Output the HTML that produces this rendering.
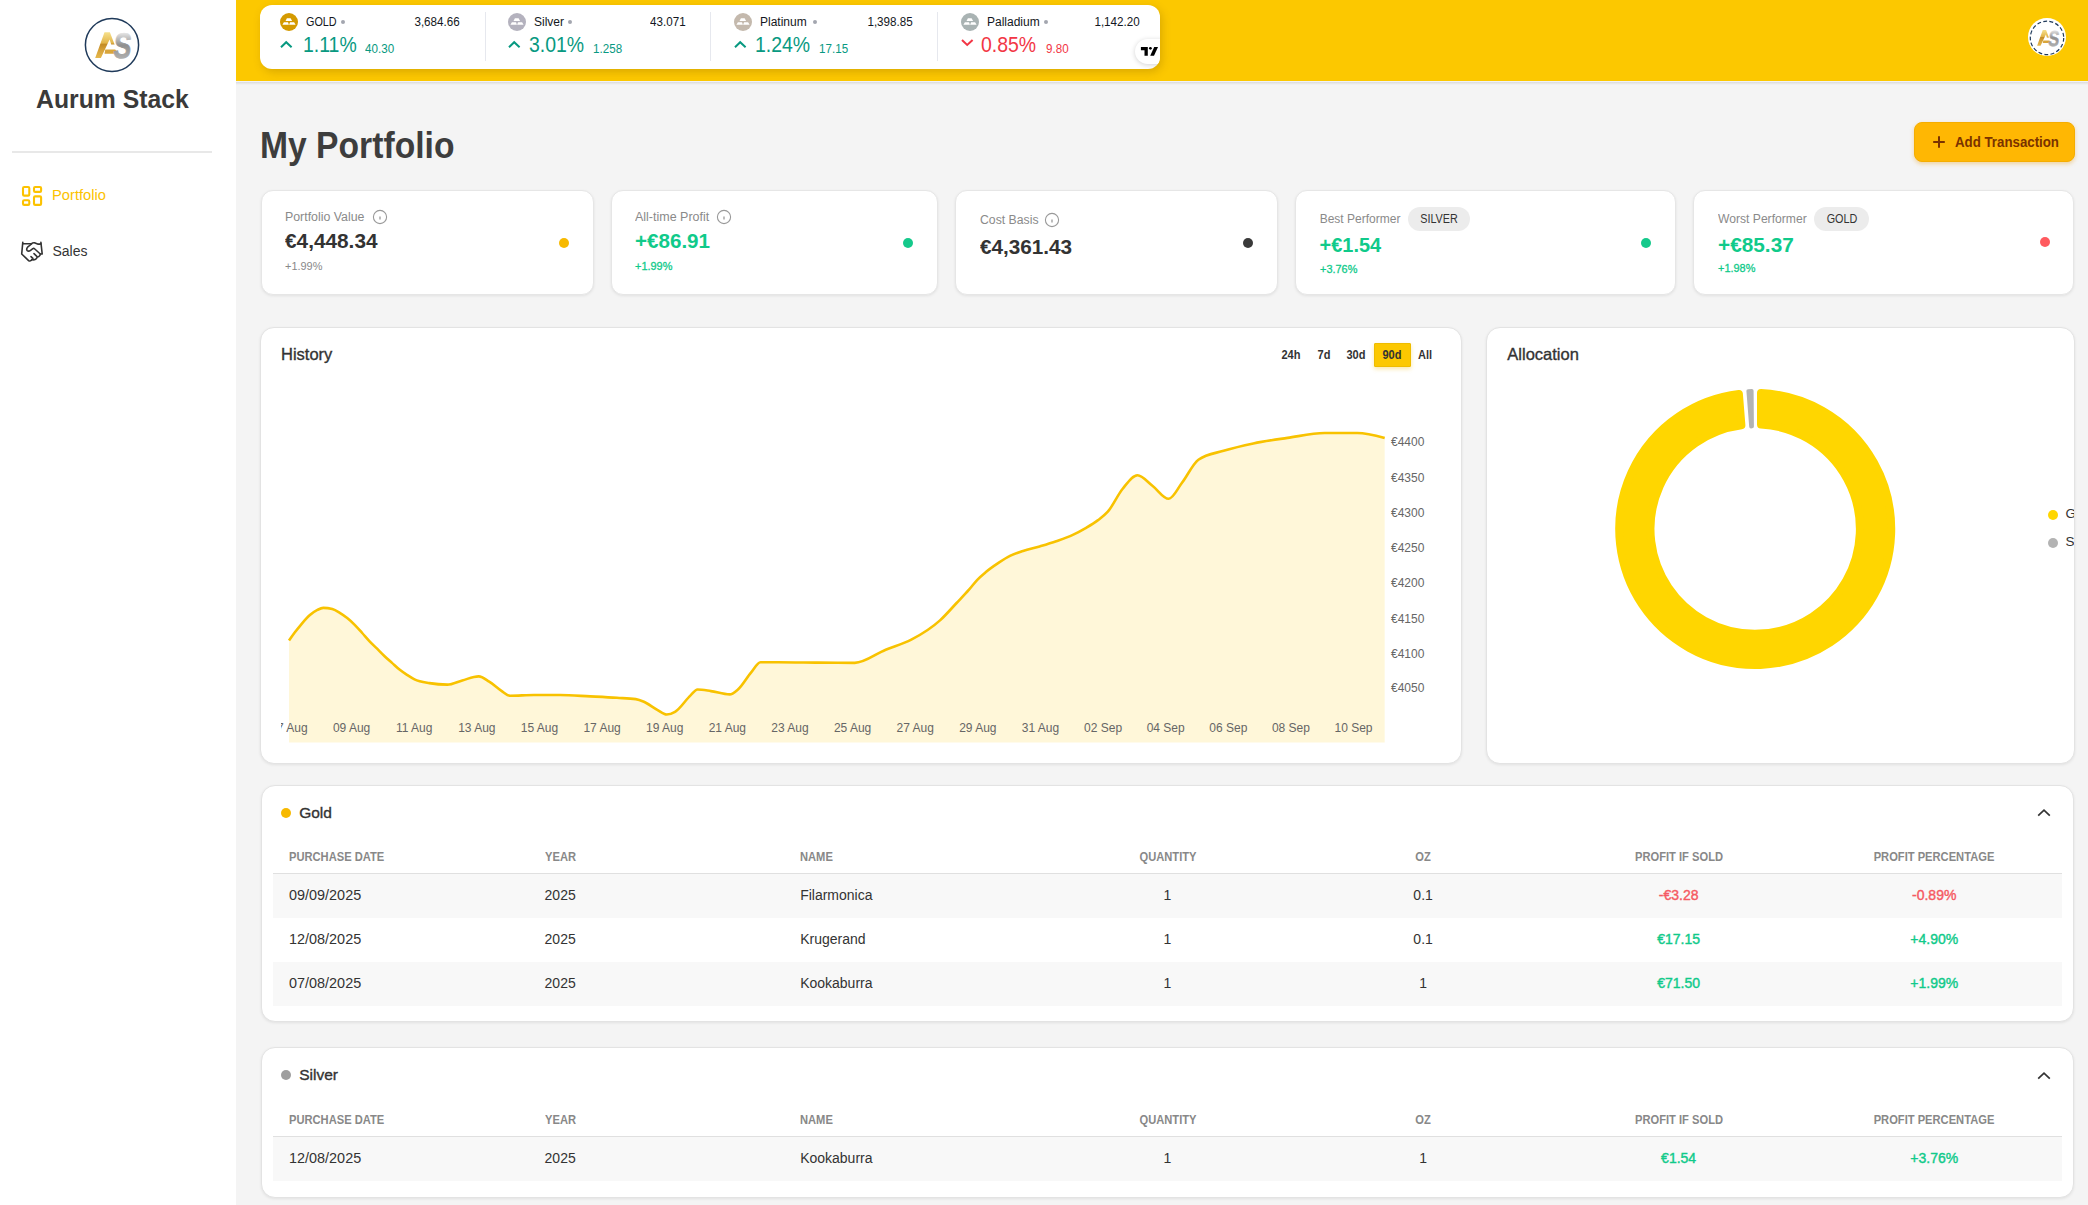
<!DOCTYPE html><html><head><meta charset="utf-8"><style>
html,body{margin:0;padding:0;}
body{width:2088px;height:1205px;position:relative;overflow:hidden;background:#f4f4f4;font-family:"Liberation Sans",sans-serif;}
.t{position:absolute;white-space:nowrap;}
.card{position:absolute;background:#fff;border:1px solid #e3e3e3;box-shadow:0 1px 3px rgba(0,0,0,0.08);box-sizing:border-box;}
</style></head><body>
<div style="position:absolute;left:0px;top:0px;width:236px;height:1205px;background:#fff;"></div>
<svg style="position:absolute;left:84px;top:17px" width="56" height="56" viewBox="0 0 56 56">
<defs>
<linearGradient id="ga" x1="0" y1="0" x2="0" y2="1"><stop offset="0" stop-color="#f6e08c"/><stop offset="0.42" stop-color="#e2b54a"/><stop offset="0.46" stop-color="#c38b26"/><stop offset="0.7" stop-color="#d6a23a"/><stop offset="1" stop-color="#e6b84c"/></linearGradient>
<linearGradient id="gs" x1="0" y1="0" x2="0" y2="1"><stop offset="0" stop-color="#eeeeee"/><stop offset="0.5" stop-color="#9a9a9a"/><stop offset="1" stop-color="#b8b8b8"/></linearGradient>
<linearGradient id="gs2" gradientUnits="userSpaceOnUse" x1="0" y1="-26" x2="0" y2="1"><stop offset="0" stop-color="#f0f0f0"/><stop offset="0.5" stop-color="#8f8f8f"/><stop offset="1" stop-color="#b0b0b0"/></linearGradient>
</defs>
<circle cx="28" cy="28" r="26.6" fill="#fff" stroke="#1f3a5a" stroke-width="1.5"/>
<path d="M20.5,15.3 L25.9,15.3 L30.6,27.5 L27.2,27.5 L25.6,22.6 L16.9,41 L11.2,41 Z" fill="url(#ga)"/>
<path d="M21.3,32.4 L31.2,32.4 L32.8,34.3 L30.8,36.7 L20.5,36.7 Z" fill="#d9a53a"/>
<text x="0" y="0" font-family="Liberation Sans" font-weight="700" font-size="35" fill="url(#gs2)" text-anchor="middle" stroke="url(#gs2)" stroke-width="0.8" transform="translate(37.4,40.9) scale(0.76,1.02) skewX(-8)">S</text>
</svg>
<div class="t" style="left:36.10px;top:85.84px;font-size:26px;line-height:26px;color:#3a3a3a;font-weight:700;transform:scaleX(0.952);transform-origin:left center;">Aurum Stack</div>
<div style="position:absolute;left:12px;top:151px;width:200px;height:2px;background:#e8e8e8;"></div>
<svg style="position:absolute;left:20px;top:184px" width="24" height="24" viewBox="0 0 24 24" fill="none" stroke="#fcc200" stroke-width="2.1">
<rect x="3" y="3" width="6.3" height="8.6" rx="1.2"/><rect x="14" y="3" width="7.1" height="4.9" rx="1.2"/>
<rect x="3" y="16.2" width="6.3" height="4.7" rx="1.2"/><rect x="14" y="12.4" width="7.1" height="8.5" rx="1.2"/>
</svg>
<div class="t" style="left:52.30px;top:187.95px;font-size:14px;line-height:14px;color:#fcc200;font-weight:400;transform:scaleX(1.05);transform-origin:left center;">Portfolio</div>
<svg style="position:absolute;left:20px;top:240px" width="24" height="24" viewBox="0 0 24 24" fill="none" stroke="#333" stroke-width="1.6" stroke-linejoin="round" stroke-linecap="round">
<path d="M2.8,2.3 L1.7,14 L8.6,20.6 Q9.8,21.5 11.2,20.4 L11.9,19.6"/>
<path d="M2.9,3.8 L11.2,3.8 Q13,2.4 15,2.9 L17.6,4 Q18.4,4.3 20.9,3.9"/>
<path d="M20.9,2.4 L22.2,14 L20.3,14"/>
<path d="M11.5,4 L7.6,7.2 Q6,9 7.2,10.6 Q8.6,11.8 10.6,10.3 L12.8,8.6 Q13.8,8.1 14.8,9 L20.3,14 Q20.3,15.5 18.9,16.4 L17.3,17.1 Q16.8,18.5 15.6,19.2 L14.3,19.8 Q13,20.1 11.9,19.6"/>
<path d="M14,13.6 L16.6,16.1 M11,16.6 L12.9,18.4"/>
</svg>
<div class="t" style="left:52.50px;top:244.05px;font-size:14px;line-height:14px;color:#333;font-weight:400;">Sales</div>
<div style="position:absolute;left:236px;top:0px;width:1852px;height:81px;background:#fcc800;"></div>
<div style="position:absolute;left:236px;top:81px;width:1852px;height:1px;background:#f0f2f9;"></div>
<div style="position:absolute;left:236px;top:82px;width:1852px;height:3px;background:linear-gradient(rgba(0,0,0,0.1),rgba(0,0,0,0));"></div>
<div style="position:absolute;left:260px;top:5px;width:900px;height:64px;border-radius:12px;background:#fff;box-shadow:2px 3px 8px rgba(120,80,0,0.25);overflow:hidden"><div style="position:absolute;left:874.5px;top:33.8px;width:60px;height:25px;border-radius:13px;background:#fff;box-shadow:0 1px 5px rgba(0,0,0,0.18)"></div><svg style="position:absolute;left:880px;top:41px" width="20" height="11" viewBox="0 0 20 11"><path d="M0.9,1 L7.8,1 L7.8,9.8 L4.5,9.8 L4.5,4.2 L0.9,4.2 Z" fill="#000"/><circle cx="10.4" cy="2.3" r="1.4" fill="#000"/><path d="M14.2,1 L18,1 L14,9.8 L10.2,9.8 Z" fill="#000"/></svg></div><div style="position:absolute;left:484.5px;top:12px;width:1px;height:49px;background:#e6e8ee;"></div>
<div style="position:absolute;left:710.3px;top:12px;width:1px;height:49px;background:#e6e8ee;"></div>
<div style="position:absolute;left:937.2px;top:12px;width:1px;height:49px;background:#e6e8ee;"></div>
<svg style="position:absolute;left:280px;top:13px" width="18" height="18" viewBox="0 0 18 18"><circle cx="9" cy="9" r="9" fill="#d49a00"/>
<path d="M6.9,5.2 L10.6,5.2 L12.1,7.9 L5.5,7.9 Z M3.9,9.2 L8.0,9.2 L8.9,11.8 L2.4,11.8 Z M10.1,9.2 L14.1,9.2 L15.6,11.8 L9.1,11.8 Z" fill="#fff"/></svg>
<div class="t" style="left:306.00px;top:16.44px;font-size:12px;line-height:12px;color:#131722;font-weight:400;transform:scaleX(0.9);transform-origin:left center;">GOLD</div>
<div style="position:absolute;left:340.80px;top:20.00px;width:4px;height:4px;border-radius:50%;background:#a3a6af"></div>
<div class="t" style="right:1628.50px;text-align:right;top:16.24px;font-size:12px;line-height:12px;color:#131722;font-weight:400;transform:scaleX(0.97);transform-origin:right center;">3,684.66</div>
<svg style="position:absolute;left:280px;top:40px" width="13" height="9" viewBox="0 0 13 9"><path d="M1,7.2 L6.2,2.2 L11.6,7.2" fill="none" stroke="#089981" stroke-width="2"/></svg>
<div class="t" style="left:302.50px;top:35.40px;font-size:21.5px;line-height:21.5px;color:#089981;font-weight:400;transform:scaleX(0.905);transform-origin:left center;">1.11%</div>
<div class="t" style="left:365.00px;top:43.12px;font-size:12.5px;line-height:12.5px;color:#089981;font-weight:400;transform:scaleX(0.93);transform-origin:left center;">40.30</div>
<svg style="position:absolute;left:508px;top:13px" width="18" height="18" viewBox="0 0 18 18"><circle cx="9" cy="9" r="9" fill="#b4b2be"/>
<path d="M6.9,5.2 L10.6,5.2 L12.1,7.9 L5.5,7.9 Z M3.9,9.2 L8.0,9.2 L8.9,11.8 L2.4,11.8 Z M10.1,9.2 L14.1,9.2 L15.6,11.8 L9.1,11.8 Z" fill="#fff"/></svg>
<div class="t" style="left:534.00px;top:16.44px;font-size:12px;line-height:12px;color:#131722;font-weight:400;transform:scaleX(1.0);transform-origin:left center;">Silver</div>
<div style="position:absolute;left:567.80px;top:20.00px;width:4px;height:4px;border-radius:50%;background:#a3a6af"></div>
<div class="t" style="right:1402.50px;text-align:right;top:16.24px;font-size:12px;line-height:12px;color:#131722;font-weight:400;transform:scaleX(0.97);transform-origin:right center;">43.071</div>
<svg style="position:absolute;left:508px;top:40px" width="13" height="9" viewBox="0 0 13 9"><path d="M1,7.2 L6.2,2.2 L11.6,7.2" fill="none" stroke="#089981" stroke-width="2"/></svg>
<div class="t" style="left:528.80px;top:35.40px;font-size:21.5px;line-height:21.5px;color:#089981;font-weight:400;transform:scaleX(0.905);transform-origin:left center;">3.01%</div>
<div class="t" style="left:593.00px;top:43.12px;font-size:12.5px;line-height:12.5px;color:#089981;font-weight:400;transform:scaleX(0.93);transform-origin:left center;">1.258</div>
<svg style="position:absolute;left:734px;top:13px" width="18" height="18" viewBox="0 0 18 18"><circle cx="9" cy="9" r="9" fill="#c4b9ad"/>
<path d="M6.9,5.2 L10.6,5.2 L12.1,7.9 L5.5,7.9 Z M3.9,9.2 L8.0,9.2 L8.9,11.8 L2.4,11.8 Z M10.1,9.2 L14.1,9.2 L15.6,11.8 L9.1,11.8 Z" fill="#fff"/></svg>
<div class="t" style="left:760.00px;top:16.44px;font-size:12px;line-height:12px;color:#131722;font-weight:400;transform:scaleX(1.0);transform-origin:left center;">Platinum</div>
<div style="position:absolute;left:813.00px;top:20.00px;width:4px;height:4px;border-radius:50%;background:#a3a6af"></div>
<div class="t" style="right:1175.50px;text-align:right;top:16.24px;font-size:12px;line-height:12px;color:#131722;font-weight:400;transform:scaleX(0.97);transform-origin:right center;">1,398.85</div>
<svg style="position:absolute;left:734px;top:40px" width="13" height="9" viewBox="0 0 13 9"><path d="M1,7.2 L6.2,2.2 L11.6,7.2" fill="none" stroke="#089981" stroke-width="2"/></svg>
<div class="t" style="left:755.20px;top:35.40px;font-size:21.5px;line-height:21.5px;color:#089981;font-weight:400;transform:scaleX(0.905);transform-origin:left center;">1.24%</div>
<div class="t" style="left:819.00px;top:43.12px;font-size:12.5px;line-height:12.5px;color:#089981;font-weight:400;transform:scaleX(0.93);transform-origin:left center;">17.15</div>
<svg style="position:absolute;left:961px;top:13px" width="18" height="18" viewBox="0 0 18 18"><circle cx="9" cy="9" r="9" fill="#a9b3b3"/>
<path d="M6.9,5.2 L10.6,5.2 L12.1,7.9 L5.5,7.9 Z M3.9,9.2 L8.0,9.2 L8.9,11.8 L2.4,11.8 Z M10.1,9.2 L14.1,9.2 L15.6,11.8 L9.1,11.8 Z" fill="#fff"/></svg>
<div class="t" style="left:987.00px;top:16.44px;font-size:12px;line-height:12px;color:#131722;font-weight:400;transform:scaleX(1.0);transform-origin:left center;">Palladium</div>
<div style="position:absolute;left:1044.00px;top:20.00px;width:4px;height:4px;border-radius:50%;background:#a3a6af"></div>
<div class="t" style="right:948.50px;text-align:right;top:16.24px;font-size:12px;line-height:12px;color:#131722;font-weight:400;transform:scaleX(0.97);transform-origin:right center;">1,142.20</div>
<svg style="position:absolute;left:961px;top:38px" width="13" height="9" viewBox="0 0 13 9"><path d="M1,2 L6.2,7 L11.6,2" fill="none" stroke="#f23645" stroke-width="2"/></svg>
<div class="t" style="left:981.20px;top:35.40px;font-size:21.5px;line-height:21.5px;color:#f23645;font-weight:400;transform:scaleX(0.905);transform-origin:left center;">0.85%</div>
<div class="t" style="left:1046.00px;top:43.12px;font-size:12.5px;line-height:12.5px;color:#f23645;font-weight:400;transform:scaleX(0.93);transform-origin:left center;">9.80</div>
<svg style="position:absolute;left:2028px;top:18px" width="38" height="39" viewBox="0 0 38 39">
<circle cx="19" cy="19" r="19" fill="#fff"/>
<circle cx="19" cy="19.9" r="16.7" fill="none" stroke="#1f3a5a" stroke-width="1.2" stroke-dasharray="3.9 2.3"/>
<g transform="translate(2.27,2.7) scale(0.61)">
<path d="M20.5,15.3 L25.9,15.3 L30.6,27.5 L27.2,27.5 L25.6,22.6 L16.9,41 L11.2,41 Z" fill="url(#ga)"/>
<path d="M21.3,32.4 L31.2,32.4 L32.8,34.3 L30.8,36.7 L20.5,36.7 Z" fill="#d9a53a"/>
<text x="0" y="0" font-family="Liberation Sans" font-weight="700" font-size="35" fill="url(#gs2)" stroke="url(#gs2)" stroke-width="0.8" transform="translate(37.4,40.9) scale(0.76,1.02) skewX(-8)" text-anchor="middle">S</text>
</g>
</svg>
<div class="t" style="left:259.80px;top:127.52px;font-size:36px;line-height:36px;color:#3d3d3d;font-weight:700;transform:scaleX(0.935);transform-origin:left center;">My Portfolio</div>
<div style="position:absolute;left:1914px;top:122px;width:161px;height:40px;border-radius:8px;background:#ffb703;box-shadow:0 2px 4px rgba(230,150,0,0.35);box-sizing:border-box;border:1px solid #f5ad00"></div>
<svg style="position:absolute;left:1932px;top:135px" width="14" height="14" viewBox="0 0 14 14"><path d="M7,1.2 V12.8 M1.2,7 H12.8" stroke="#7a3200" stroke-width="2"/></svg>
<div class="t" style="left:1955.20px;top:135.35px;font-size:14px;line-height:14px;color:#7a3200;font-weight:700;transform:scaleX(0.948);transform-origin:left center;">Add Transaction</div>
<div class="card" style="left:261px;top:190px;width:333px;height:105px;border-radius:12px;border-color:#e6e6e6"></div>
<div class="card" style="left:611px;top:190px;width:327px;height:105px;border-radius:12px;border-color:#e6e6e6"></div>
<div class="card" style="left:955px;top:190px;width:323px;height:105px;border-radius:12px;border-color:#e6e6e6"></div>
<div class="card" style="left:1295px;top:190px;width:381px;height:105px;border-radius:12px;border-color:#e6e6e6"></div>
<div class="card" style="left:1693px;top:190px;width:381px;height:105px;border-radius:12px;border-color:#e6e6e6"></div>
<div class="t" style="left:285.40px;top:210.64px;font-size:12px;line-height:12px;color:#8a8a8a;font-weight:400;transform:scaleX(1.03);transform-origin:left center;">Portfolio Value</div>
<svg style="position:absolute;left:372px;top:209px" width="16" height="16" viewBox="0 0 16 16"><circle cx="8" cy="8" r="6.6" fill="none" stroke="#999" stroke-width="1.1"/><path d="M8,7.6 V10.5" stroke="#999" stroke-width="1.3"/></svg>
<div class="t" style="left:285.00px;top:231.07px;font-size:20px;line-height:20px;color:#333;font-weight:700;transform:scaleX(1.04);transform-origin:left center;">&euro;4,448.34</div>
<div class="t" style="left:285.00px;top:261.26px;font-size:11.5px;line-height:11.5px;color:#888;font-weight:400;transform:scaleX(0.95);transform-origin:left center;">+1.99%</div>
<div style="position:absolute;left:559.00px;top:238.00px;width:10px;height:10px;border-radius:50%;background:#f7b900"></div>
<div class="t" style="left:635.40px;top:210.64px;font-size:12px;line-height:12px;color:#8a8a8a;font-weight:400;transform:scaleX(1.04);transform-origin:left center;">All-time Profit</div>
<svg style="position:absolute;left:716px;top:209px" width="16" height="16" viewBox="0 0 16 16"><circle cx="8" cy="8" r="6.6" fill="none" stroke="#999" stroke-width="1.1"/><path d="M8,7.6 V10.5" stroke="#999" stroke-width="1.3"/></svg>
<div class="t" style="left:635.00px;top:231.07px;font-size:20px;line-height:20px;color:#10ca8a;font-weight:700;transform:scaleX(1.03);transform-origin:left center;">+&euro;86.91</div>
<div class="t" style="left:635.00px;top:261.26px;font-size:11.5px;line-height:11.5px;color:#10ca8a;font-weight:400;transform:scaleX(0.95);transform-origin:left center;-webkit-text-stroke:0.3px;">+1.99%</div>
<div style="position:absolute;left:903.00px;top:238.00px;width:10px;height:10px;border-radius:50%;background:#15c98b"></div>
<div class="t" style="left:979.50px;top:213.84px;font-size:12px;line-height:12px;color:#8a8a8a;font-weight:400;transform:scaleX(1.02);transform-origin:left center;">Cost Basis</div>
<svg style="position:absolute;left:1043.7px;top:211.5px" width="16" height="16" viewBox="0 0 16 16"><circle cx="8" cy="8" r="6.6" fill="none" stroke="#999" stroke-width="1.1"/><path d="M8,7.6 V10.5" stroke="#999" stroke-width="1.3"/></svg>
<div class="t" style="left:979.50px;top:237.47px;font-size:20px;line-height:20px;color:#333;font-weight:700;transform:scaleX(1.035);transform-origin:left center;">&euro;4,361.43</div>
<div style="position:absolute;left:1243.00px;top:238.00px;width:10px;height:10px;border-radius:50%;background:#3a3a3a"></div>
<div class="t" style="left:1319.70px;top:212.84px;font-size:12px;line-height:12px;color:#8a8a8a;font-weight:400;transform:scaleX(1.0);transform-origin:left center;">Best Performer</div>
<div style="position:absolute;left:1408px;top:207px;width:62px;height:24px;border-radius:12px;background:#ececec"></div>
<div class="t" style="left:1039.00px;width:800px;text-align:center;top:213.14px;font-size:12px;line-height:12px;color:#333;font-weight:400;transform:scaleX(0.9);transform-origin:center center;">SILVER</div>
<div class="t" style="left:1319.50px;top:234.87px;font-size:20px;line-height:20px;color:#10ca8a;font-weight:700;">+&euro;1.54</div>
<div class="t" style="left:1319.50px;top:263.76px;font-size:11.5px;line-height:11.5px;color:#10ca8a;font-weight:400;transform:scaleX(0.95);transform-origin:left center;-webkit-text-stroke:0.3px;">+3.76%</div>
<div style="position:absolute;left:1641.00px;top:238.00px;width:10px;height:10px;border-radius:50%;background:#15c98b"></div>
<div class="t" style="left:1717.70px;top:212.84px;font-size:12px;line-height:12px;color:#8a8a8a;font-weight:400;transform:scaleX(1.01);transform-origin:left center;">Worst Performer</div>
<div style="position:absolute;left:1814px;top:207px;width:55px;height:24px;border-radius:12px;background:#ececec"></div>
<div class="t" style="left:1441.50px;width:800px;text-align:center;top:213.14px;font-size:12px;line-height:12px;color:#333;font-weight:400;transform:scaleX(0.9);transform-origin:center center;">GOLD</div>
<div class="t" style="left:1717.50px;top:235.07px;font-size:20px;line-height:20px;color:#10ca8a;font-weight:700;transform:scaleX(1.04);transform-origin:left center;">+&euro;85.37</div>
<div class="t" style="left:1717.50px;top:263.06px;font-size:11.5px;line-height:11.5px;color:#10ca8a;font-weight:400;transform:scaleX(0.95);transform-origin:left center;-webkit-text-stroke:0.3px;">+1.98%</div>
<div style="position:absolute;left:2040.00px;top:237.00px;width:10px;height:10px;border-radius:50%;background:#ff5a5f"></div>
<div class="card" style="left:260px;top:327px;width:1202px;height:437px;border-radius:14px"></div>
<div class="t" style="left:281.00px;top:346.03px;font-size:16.5px;line-height:16.5px;color:#333;font-weight:400;-webkit-text-stroke:0.35px;">History</div>
<div class="t" style="left:891.20px;width:800px;text-align:center;top:348.84px;font-size:12px;line-height:12px;color:#333;font-weight:700;transform:scaleX(0.92);transform-origin:center center;">24h</div>
<div class="t" style="left:923.75px;width:800px;text-align:center;top:348.84px;font-size:12px;line-height:12px;color:#333;font-weight:700;transform:scaleX(0.92);transform-origin:center center;">7d</div>
<div class="t" style="left:956.35px;width:800px;text-align:center;top:348.84px;font-size:12px;line-height:12px;color:#333;font-weight:700;transform:scaleX(0.92);transform-origin:center center;">30d</div>
<div class="t" style="left:1025.00px;width:800px;text-align:center;top:348.84px;font-size:12px;line-height:12px;color:#333;font-weight:700;transform:scaleX(0.92);transform-origin:center center;">All</div>
<div style="position:absolute;left:1374px;top:343px;width:37px;height:24px;box-sizing:border-box;background:#fcc800;border:1px solid #eebc00;border-radius:1px;box-shadow:0 2px 4px rgba(240,190,0,0.35)"></div>
<div class="t" style="left:992.40px;width:800px;text-align:center;top:348.84px;font-size:12px;line-height:12px;color:#333;font-weight:700;transform:scaleX(0.92);transform-origin:center center;">90d</div>
<svg style="position:absolute;left:0;top:0;overflow:visible" width="2088" height="1205" viewBox="0 0 2088 1205">
<defs><clipPath id="cl"><rect x="281" y="380" width="1180" height="380"/></clipPath></defs>
<path d="M289.0,640.5 C290.97,637.70 292.93,634.90 294.9,632.3 C296.90,629.66 298.90,627.16 300.9,624.8 C303.90,621.26 306.90,617.70 309.9,615.1 C312.40,612.93 314.90,611.14 317.4,609.9 C319.37,608.93 321.33,607.90 323.3,607.9 C326.30,607.90 329.30,608.30 332.3,609.1 C334.80,609.77 337.30,611.39 339.8,612.9 C342.27,614.39 344.73,616.13 347.2,618.1 C349.70,620.09 352.20,622.32 354.7,624.8 C357.20,627.28 359.70,630.23 362.2,633.0 C364.67,635.73 367.13,638.70 369.6,641.3 C372.10,643.94 374.60,646.22 377.1,648.7 C379.60,651.18 382.10,653.82 384.6,656.2 C387.07,658.55 389.53,660.68 392.0,662.9 C394.50,665.15 397.00,667.60 399.5,669.6 C402.00,671.60 404.50,673.27 407.0,674.9 C409.50,676.53 412.00,678.19 414.5,679.4 C419.47,681.80 424.43,682.27 429.4,683.1 C435.37,684.10 441.33,684.60 447.3,684.6 C452.30,684.60 457.30,681.71 462.3,680.4 C467.77,678.96 473.23,676.40 478.7,676.4 C482.20,676.40 485.70,679.44 489.2,681.6 C493.17,684.05 497.13,688.00 501.1,690.6 C504.10,692.56 507.10,695.80 510.1,695.8 C518.07,695.80 526.03,695.00 534.0,695.0 C542.67,695.00 551.33,695.00 560.0,695.0 C570.07,695.00 580.13,695.90 590.2,696.4 C599.13,696.84 608.07,697.24 617.0,697.8 C623.27,698.19 629.53,698.23 635.8,699.1 C638.50,699.47 641.20,700.63 643.9,701.8 C648.37,703.73 652.83,707.39 657.3,709.8 C660.43,711.49 663.57,714.50 666.7,714.5 C669.47,714.50 672.23,713.40 675.0,711.8 C680.27,708.76 685.53,699.85 690.8,695.1 C693.03,693.09 695.27,689.50 697.5,689.5 C701.97,689.50 706.43,690.46 710.9,691.1 C717.17,691.99 723.43,694.40 729.7,694.4 C732.37,694.40 735.03,691.96 737.7,689.7 C742.20,685.88 746.70,677.56 751.2,672.3 C754.30,668.68 757.40,662.20 760.5,662.2 C766.33,662.20 772.17,662.20 778.0,662.2 C791.40,662.20 804.80,662.48 818.2,662.6 C830.37,662.71 842.53,662.90 854.7,662.9 C865.03,662.90 875.37,653.90 885.7,649.7 C894.23,646.23 902.77,644.17 911.3,639.7 C920.87,634.69 930.43,629.11 940.0,620.4 C945.53,615.36 951.07,608.88 956.6,603.0 C960.73,598.61 964.87,594.43 969.0,589.7 C971.77,586.53 974.53,582.70 977.3,579.8 C980.07,576.90 982.83,574.61 985.6,572.3 C989.77,568.83 993.93,565.98 998.1,563.2 C1002.23,560.45 1006.37,557.71 1010.5,555.7 C1014.67,553.67 1018.83,552.48 1023.0,551.1 C1028.53,549.27 1034.07,548.05 1039.6,546.4 C1045.13,544.75 1050.67,543.12 1056.2,541.2 C1061.73,539.28 1067.27,537.48 1072.8,534.9 C1076.93,532.97 1081.07,530.71 1085.2,528.3 C1089.37,525.88 1093.53,523.56 1097.7,520.4 C1101.07,517.85 1104.43,515.53 1107.8,511.7 C1112.77,506.05 1117.73,494.78 1122.7,488.7 C1127.63,482.66 1132.57,475.30 1137.5,475.3 C1142.47,475.30 1147.43,481.98 1152.4,485.7 C1157.83,489.77 1163.27,498.80 1168.7,498.8 C1173.13,498.80 1177.57,488.54 1182.0,482.8 C1187.47,475.72 1192.93,463.56 1198.4,459.7 C1206.80,453.77 1215.20,453.37 1223.6,450.8 C1233.50,447.78 1243.40,445.46 1253.3,443.4 C1264.70,441.03 1276.10,439.58 1287.5,437.9 C1299.87,436.08 1312.23,433.00 1324.6,433.0 C1335.50,433.00 1346.40,433.00 1357.3,433.0 C1366.43,433.00 1375.57,435.45 1384.7,437.9 L1384.7,742.5 L289.0,742.5 Z" fill="#fcc800" fill-opacity="0.15"/>
<path d="M289.0,640.5 C290.97,637.70 292.93,634.90 294.9,632.3 C296.90,629.66 298.90,627.16 300.9,624.8 C303.90,621.26 306.90,617.70 309.9,615.1 C312.40,612.93 314.90,611.14 317.4,609.9 C319.37,608.93 321.33,607.90 323.3,607.9 C326.30,607.90 329.30,608.30 332.3,609.1 C334.80,609.77 337.30,611.39 339.8,612.9 C342.27,614.39 344.73,616.13 347.2,618.1 C349.70,620.09 352.20,622.32 354.7,624.8 C357.20,627.28 359.70,630.23 362.2,633.0 C364.67,635.73 367.13,638.70 369.6,641.3 C372.10,643.94 374.60,646.22 377.1,648.7 C379.60,651.18 382.10,653.82 384.6,656.2 C387.07,658.55 389.53,660.68 392.0,662.9 C394.50,665.15 397.00,667.60 399.5,669.6 C402.00,671.60 404.50,673.27 407.0,674.9 C409.50,676.53 412.00,678.19 414.5,679.4 C419.47,681.80 424.43,682.27 429.4,683.1 C435.37,684.10 441.33,684.60 447.3,684.6 C452.30,684.60 457.30,681.71 462.3,680.4 C467.77,678.96 473.23,676.40 478.7,676.4 C482.20,676.40 485.70,679.44 489.2,681.6 C493.17,684.05 497.13,688.00 501.1,690.6 C504.10,692.56 507.10,695.80 510.1,695.8 C518.07,695.80 526.03,695.00 534.0,695.0 C542.67,695.00 551.33,695.00 560.0,695.0 C570.07,695.00 580.13,695.90 590.2,696.4 C599.13,696.84 608.07,697.24 617.0,697.8 C623.27,698.19 629.53,698.23 635.8,699.1 C638.50,699.47 641.20,700.63 643.9,701.8 C648.37,703.73 652.83,707.39 657.3,709.8 C660.43,711.49 663.57,714.50 666.7,714.5 C669.47,714.50 672.23,713.40 675.0,711.8 C680.27,708.76 685.53,699.85 690.8,695.1 C693.03,693.09 695.27,689.50 697.5,689.5 C701.97,689.50 706.43,690.46 710.9,691.1 C717.17,691.99 723.43,694.40 729.7,694.4 C732.37,694.40 735.03,691.96 737.7,689.7 C742.20,685.88 746.70,677.56 751.2,672.3 C754.30,668.68 757.40,662.20 760.5,662.2 C766.33,662.20 772.17,662.20 778.0,662.2 C791.40,662.20 804.80,662.48 818.2,662.6 C830.37,662.71 842.53,662.90 854.7,662.9 C865.03,662.90 875.37,653.90 885.7,649.7 C894.23,646.23 902.77,644.17 911.3,639.7 C920.87,634.69 930.43,629.11 940.0,620.4 C945.53,615.36 951.07,608.88 956.6,603.0 C960.73,598.61 964.87,594.43 969.0,589.7 C971.77,586.53 974.53,582.70 977.3,579.8 C980.07,576.90 982.83,574.61 985.6,572.3 C989.77,568.83 993.93,565.98 998.1,563.2 C1002.23,560.45 1006.37,557.71 1010.5,555.7 C1014.67,553.67 1018.83,552.48 1023.0,551.1 C1028.53,549.27 1034.07,548.05 1039.6,546.4 C1045.13,544.75 1050.67,543.12 1056.2,541.2 C1061.73,539.28 1067.27,537.48 1072.8,534.9 C1076.93,532.97 1081.07,530.71 1085.2,528.3 C1089.37,525.88 1093.53,523.56 1097.7,520.4 C1101.07,517.85 1104.43,515.53 1107.8,511.7 C1112.77,506.05 1117.73,494.78 1122.7,488.7 C1127.63,482.66 1132.57,475.30 1137.5,475.3 C1142.47,475.30 1147.43,481.98 1152.4,485.7 C1157.83,489.77 1163.27,498.80 1168.7,498.8 C1173.13,498.80 1177.57,488.54 1182.0,482.8 C1187.47,475.72 1192.93,463.56 1198.4,459.7 C1206.80,453.77 1215.20,453.37 1223.6,450.8 C1233.50,447.78 1243.40,445.46 1253.3,443.4 C1264.70,441.03 1276.10,439.58 1287.5,437.9 C1299.87,436.08 1312.23,433.00 1324.6,433.0 C1335.50,433.00 1346.40,433.00 1357.3,433.0 C1366.43,433.00 1375.57,435.45 1384.7,437.9" fill="none" stroke="#f8c200" stroke-width="2.6"/>
</svg>
<div class="t" style="left:1391.00px;top:435.84px;font-size:12px;line-height:12px;color:#666;font-weight:400;">&euro;4400</div>
<div class="t" style="left:1391.00px;top:471.94px;font-size:12px;line-height:12px;color:#666;font-weight:400;">&euro;4350</div>
<div class="t" style="left:1391.00px;top:506.64px;font-size:12px;line-height:12px;color:#666;font-weight:400;">&euro;4300</div>
<div class="t" style="left:1391.00px;top:541.74px;font-size:12px;line-height:12px;color:#666;font-weight:400;">&euro;4250</div>
<div class="t" style="left:1391.00px;top:576.74px;font-size:12px;line-height:12px;color:#666;font-weight:400;">&euro;4200</div>
<div class="t" style="left:1391.00px;top:612.54px;font-size:12px;line-height:12px;color:#666;font-weight:400;">&euro;4150</div>
<div class="t" style="left:1391.00px;top:647.54px;font-size:12px;line-height:12px;color:#666;font-weight:400;">&euro;4100</div>
<div class="t" style="left:1391.00px;top:682.24px;font-size:12px;line-height:12px;color:#666;font-weight:400;">&euro;4050</div>
<div style="position:absolute;left:281px;top:700px;width:1180px;height:50px;overflow:hidden"><div class="t" style="left:-42.00px;width:100px;text-align:center;top:21.74px;font-size:12px;line-height:12px;color:#666">07 Aug</div><div class="t" style="left:20.62px;width:100px;text-align:center;top:21.74px;font-size:12px;line-height:12px;color:#666">09 Aug</div><div class="t" style="left:83.24px;width:100px;text-align:center;top:21.74px;font-size:12px;line-height:12px;color:#666">11 Aug</div><div class="t" style="left:145.86px;width:100px;text-align:center;top:21.74px;font-size:12px;line-height:12px;color:#666">13 Aug</div><div class="t" style="left:208.48px;width:100px;text-align:center;top:21.74px;font-size:12px;line-height:12px;color:#666">15 Aug</div><div class="t" style="left:271.10px;width:100px;text-align:center;top:21.74px;font-size:12px;line-height:12px;color:#666">17 Aug</div><div class="t" style="left:333.72px;width:100px;text-align:center;top:21.74px;font-size:12px;line-height:12px;color:#666">19 Aug</div><div class="t" style="left:396.34px;width:100px;text-align:center;top:21.74px;font-size:12px;line-height:12px;color:#666">21 Aug</div><div class="t" style="left:458.96px;width:100px;text-align:center;top:21.74px;font-size:12px;line-height:12px;color:#666">23 Aug</div><div class="t" style="left:521.58px;width:100px;text-align:center;top:21.74px;font-size:12px;line-height:12px;color:#666">25 Aug</div><div class="t" style="left:584.20px;width:100px;text-align:center;top:21.74px;font-size:12px;line-height:12px;color:#666">27 Aug</div><div class="t" style="left:646.82px;width:100px;text-align:center;top:21.74px;font-size:12px;line-height:12px;color:#666">29 Aug</div><div class="t" style="left:709.44px;width:100px;text-align:center;top:21.74px;font-size:12px;line-height:12px;color:#666">31 Aug</div><div class="t" style="left:772.06px;width:100px;text-align:center;top:21.74px;font-size:12px;line-height:12px;color:#666">02 Sep</div><div class="t" style="left:834.68px;width:100px;text-align:center;top:21.74px;font-size:12px;line-height:12px;color:#666">04 Sep</div><div class="t" style="left:897.30px;width:100px;text-align:center;top:21.74px;font-size:12px;line-height:12px;color:#666">06 Sep</div><div class="t" style="left:959.92px;width:100px;text-align:center;top:21.74px;font-size:12px;line-height:12px;color:#666">08 Sep</div><div class="t" style="left:1022.54px;width:100px;text-align:center;top:21.74px;font-size:12px;line-height:12px;color:#666">10 Sep</div></div>
<div class="card" style="left:1486px;top:327px;width:589px;height:437px;border-radius:14px;overflow:hidden"><div class="t" style="left:560.9px;top:182.0px;width:10px;height:10px;border-radius:50%;background:#ffd600"></div><div class="t" style="left:560.9px;top:209.8px;width:10px;height:10px;border-radius:50%;background:#b3b3b3"></div><div class="t" style="left:578.6px;top:179.3px;font-size:13.5px;line-height:13.5px;color:#333">Gold</div><div class="t" style="left:578.6px;top:207.4px;font-size:13.5px;line-height:13.5px;color:#333">Silver</div></div>
<div class="t" style="left:1507.30px;top:346.23px;font-size:16.5px;line-height:16.5px;color:#333;font-weight:400;-webkit-text-stroke:0.35px;">Allocation</div>
<svg style="position:absolute;left:1600px;top:374px" width="310" height="310" viewBox="1600 374 310 310">
<path d="M1761.00,393.12 A136,136 0 1 1 1738.90,393.98 L1741.40,425.21 A104.7,104.7 0 1 0 1761.00,424.46 Z" fill="#ffd600" stroke="#ffd600" stroke-width="8" stroke-linejoin="round"/>
<path d="M1748.20,390.98 L1751.80,390.84 L1752.10,426.55 L1751.00,426.59 Z" fill="#b3b3b3" stroke="#b3b3b3" stroke-width="3.6" stroke-linejoin="round"/>
</svg>
<div class="card" style="left:261px;top:785px;width:1813px;height:237px;border-radius:14px"></div>
<div style="position:absolute;left:281.00px;top:807.50px;width:10px;height:10px;border-radius:50%;background:#f7b900"></div>
<div class="t" style="left:299.20px;top:804.88px;font-size:15.5px;line-height:15.5px;color:#333;font-weight:400;-webkit-text-stroke:0.35px;">Gold</div>
<svg style="position:absolute;left:2036px;top:805px" width="16" height="12" viewBox="0 0 16 12"><path d="M2.2,10.6 L8,5.1 L13.8,10.6" fill="none" stroke="#333" stroke-width="1.7"/></svg>
<div class="t" style="left:289.00px;top:851.14px;font-size:12px;line-height:12px;color:#888;font-weight:700;transform:scaleX(0.93);transform-origin:left center;">PURCHASE DATE</div>
<div class="t" style="left:544.57px;top:851.14px;font-size:12px;line-height:12px;color:#888;font-weight:700;transform:scaleX(0.93);transform-origin:left center;">YEAR</div>
<div class="t" style="left:800.14px;top:851.14px;font-size:12px;line-height:12px;color:#888;font-weight:700;transform:scaleX(0.93);transform-origin:left center;">NAME</div>
<div class="t" style="left:767.51px;width:800px;text-align:center;top:851.14px;font-size:12px;line-height:12px;color:#888;font-weight:700;transform:scaleX(0.93);transform-origin:center center;">QUANTITY</div>
<div class="t" style="left:1023.08px;width:800px;text-align:center;top:851.14px;font-size:12px;line-height:12px;color:#888;font-weight:700;transform:scaleX(0.93);transform-origin:center center;">OZ</div>
<div class="t" style="left:1278.65px;width:800px;text-align:center;top:851.14px;font-size:12px;line-height:12px;color:#888;font-weight:700;transform:scaleX(0.93);transform-origin:center center;">PROFIT IF SOLD</div>
<div class="t" style="left:1534.22px;width:800px;text-align:center;top:851.14px;font-size:12px;line-height:12px;color:#888;font-weight:700;transform:scaleX(0.93);transform-origin:center center;">PROFIT PERCENTAGE</div>
<div style="position:absolute;left:273px;top:873.4px;width:1789px;height:1px;background:#e0e0e0;"></div>
<div style="position:absolute;left:273px;top:874px;width:1789px;height:44px;background:#f8f8f8;"></div>
<div class="t" style="left:289.00px;top:888.25px;font-size:14px;line-height:14px;color:#333;font-weight:400;transform:scaleX(1.03);transform-origin:left center;">09/09/2025</div>
<div class="t" style="left:544.57px;top:888.25px;font-size:14px;line-height:14px;color:#333;font-weight:400;transform:scaleX(1.0);transform-origin:left center;">2025</div>
<div class="t" style="left:800.14px;top:888.25px;font-size:14px;line-height:14px;color:#333;font-weight:400;transform:scaleX(1.0);transform-origin:left center;">Filarmonica</div>
<div class="t" style="left:767.51px;width:800px;text-align:center;top:888.25px;font-size:14px;line-height:14px;color:#333;font-weight:400;">1</div>
<div class="t" style="left:1023.08px;width:800px;text-align:center;top:888.25px;font-size:14px;line-height:14px;color:#333;font-weight:400;">0.1</div>
<div class="t" style="left:1278.65px;width:800px;text-align:center;top:888.25px;font-size:14px;line-height:14px;color:#f55a63;font-weight:400;-webkit-text-stroke:0.4px;">-&euro;3.28</div>
<div class="t" style="left:1534.22px;width:800px;text-align:center;top:888.25px;font-size:14px;line-height:14px;color:#f55a63;font-weight:400;-webkit-text-stroke:0.4px;">-0.89%</div>
<div class="t" style="left:289.00px;top:932.25px;font-size:14px;line-height:14px;color:#333;font-weight:400;transform:scaleX(1.03);transform-origin:left center;">12/08/2025</div>
<div class="t" style="left:544.57px;top:932.25px;font-size:14px;line-height:14px;color:#333;font-weight:400;transform:scaleX(1.0);transform-origin:left center;">2025</div>
<div class="t" style="left:800.14px;top:932.25px;font-size:14px;line-height:14px;color:#333;font-weight:400;transform:scaleX(1.0);transform-origin:left center;">Krugerand</div>
<div class="t" style="left:767.51px;width:800px;text-align:center;top:932.25px;font-size:14px;line-height:14px;color:#333;font-weight:400;">1</div>
<div class="t" style="left:1023.08px;width:800px;text-align:center;top:932.25px;font-size:14px;line-height:14px;color:#333;font-weight:400;">0.1</div>
<div class="t" style="left:1278.65px;width:800px;text-align:center;top:932.25px;font-size:14px;line-height:14px;color:#10ca8a;font-weight:400;-webkit-text-stroke:0.4px;">&euro;17.15</div>
<div class="t" style="left:1534.22px;width:800px;text-align:center;top:932.25px;font-size:14px;line-height:14px;color:#10ca8a;font-weight:400;-webkit-text-stroke:0.4px;">+4.90%</div>
<div style="position:absolute;left:273px;top:962px;width:1789px;height:44px;background:#f8f8f8;"></div>
<div class="t" style="left:289.00px;top:976.25px;font-size:14px;line-height:14px;color:#333;font-weight:400;transform:scaleX(1.03);transform-origin:left center;">07/08/2025</div>
<div class="t" style="left:544.57px;top:976.25px;font-size:14px;line-height:14px;color:#333;font-weight:400;transform:scaleX(1.0);transform-origin:left center;">2025</div>
<div class="t" style="left:800.14px;top:976.25px;font-size:14px;line-height:14px;color:#333;font-weight:400;transform:scaleX(1.0);transform-origin:left center;">Kookaburra</div>
<div class="t" style="left:767.51px;width:800px;text-align:center;top:976.25px;font-size:14px;line-height:14px;color:#333;font-weight:400;">1</div>
<div class="t" style="left:1023.08px;width:800px;text-align:center;top:976.25px;font-size:14px;line-height:14px;color:#333;font-weight:400;">1</div>
<div class="t" style="left:1278.65px;width:800px;text-align:center;top:976.25px;font-size:14px;line-height:14px;color:#10ca8a;font-weight:400;-webkit-text-stroke:0.4px;">&euro;71.50</div>
<div class="t" style="left:1534.22px;width:800px;text-align:center;top:976.25px;font-size:14px;line-height:14px;color:#10ca8a;font-weight:400;-webkit-text-stroke:0.4px;">+1.99%</div>
<div class="card" style="left:261px;top:1047px;width:1813px;height:151px;border-radius:14px"></div>
<div style="position:absolute;left:281.00px;top:1070.00px;width:10px;height:10px;border-radius:50%;background:#9e9e9e"></div>
<div class="t" style="left:299.20px;top:1067.38px;font-size:15.5px;line-height:15.5px;color:#333;font-weight:400;-webkit-text-stroke:0.35px;">Silver</div>
<svg style="position:absolute;left:2036px;top:1067.5px" width="16" height="12" viewBox="0 0 16 12"><path d="M2.2,10.6 L8,5.1 L13.8,10.6" fill="none" stroke="#333" stroke-width="1.7"/></svg>
<div class="t" style="left:289.00px;top:1113.64px;font-size:12px;line-height:12px;color:#888;font-weight:700;transform:scaleX(0.93);transform-origin:left center;">PURCHASE DATE</div>
<div class="t" style="left:544.57px;top:1113.64px;font-size:12px;line-height:12px;color:#888;font-weight:700;transform:scaleX(0.93);transform-origin:left center;">YEAR</div>
<div class="t" style="left:800.14px;top:1113.64px;font-size:12px;line-height:12px;color:#888;font-weight:700;transform:scaleX(0.93);transform-origin:left center;">NAME</div>
<div class="t" style="left:767.51px;width:800px;text-align:center;top:1113.64px;font-size:12px;line-height:12px;color:#888;font-weight:700;transform:scaleX(0.93);transform-origin:center center;">QUANTITY</div>
<div class="t" style="left:1023.08px;width:800px;text-align:center;top:1113.64px;font-size:12px;line-height:12px;color:#888;font-weight:700;transform:scaleX(0.93);transform-origin:center center;">OZ</div>
<div class="t" style="left:1278.65px;width:800px;text-align:center;top:1113.64px;font-size:12px;line-height:12px;color:#888;font-weight:700;transform:scaleX(0.93);transform-origin:center center;">PROFIT IF SOLD</div>
<div class="t" style="left:1534.22px;width:800px;text-align:center;top:1113.64px;font-size:12px;line-height:12px;color:#888;font-weight:700;transform:scaleX(0.93);transform-origin:center center;">PROFIT PERCENTAGE</div>
<div style="position:absolute;left:273px;top:1135.9px;width:1789px;height:1px;background:#e0e0e0;"></div>
<div style="position:absolute;left:273px;top:1136.5px;width:1789px;height:44px;background:#f8f8f8;"></div>
<div class="t" style="left:289.00px;top:1150.75px;font-size:14px;line-height:14px;color:#333;font-weight:400;transform:scaleX(1.03);transform-origin:left center;">12/08/2025</div>
<div class="t" style="left:544.57px;top:1150.75px;font-size:14px;line-height:14px;color:#333;font-weight:400;transform:scaleX(1.0);transform-origin:left center;">2025</div>
<div class="t" style="left:800.14px;top:1150.75px;font-size:14px;line-height:14px;color:#333;font-weight:400;transform:scaleX(1.0);transform-origin:left center;">Kookaburra</div>
<div class="t" style="left:767.51px;width:800px;text-align:center;top:1150.75px;font-size:14px;line-height:14px;color:#333;font-weight:400;">1</div>
<div class="t" style="left:1023.08px;width:800px;text-align:center;top:1150.75px;font-size:14px;line-height:14px;color:#333;font-weight:400;">1</div>
<div class="t" style="left:1278.65px;width:800px;text-align:center;top:1150.75px;font-size:14px;line-height:14px;color:#10ca8a;font-weight:400;-webkit-text-stroke:0.4px;">&euro;1.54</div>
<div class="t" style="left:1534.22px;width:800px;text-align:center;top:1150.75px;font-size:14px;line-height:14px;color:#10ca8a;font-weight:400;-webkit-text-stroke:0.4px;">+3.76%</div>
</body></html>
